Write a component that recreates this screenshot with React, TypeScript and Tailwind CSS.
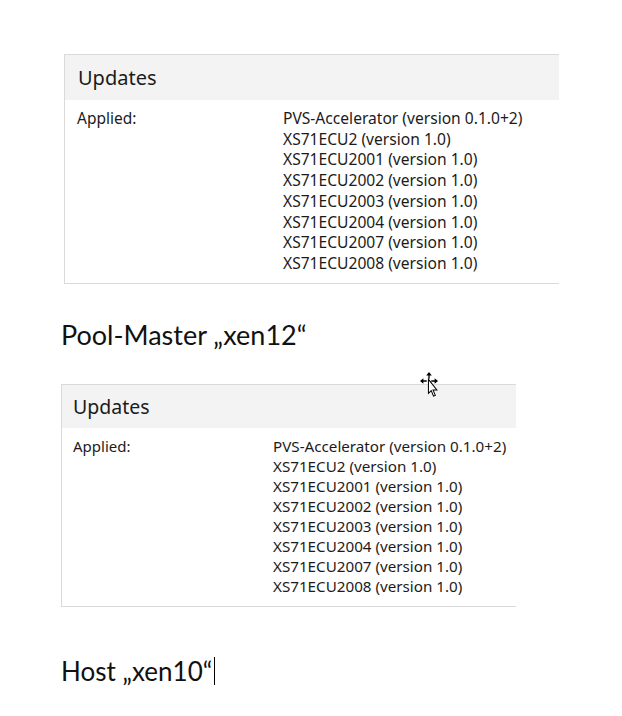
import React from "react";

const items = [
  "PVS-Accelerator (version 0.1.0+2)",
  "XS71ECU2 (version 1.0)",
  "XS71ECU2001 (version 1.0)",
  "XS71ECU2002 (version 1.0)",
  "XS71ECU2003 (version 1.0)",
  "XS71ECU2004 (version 1.0)",
  "XS71ECU2007 (version 1.0)",
  "XS71ECU2008 (version 1.0)",
];

const ui = { fontFamily: '"Noto Sans", "Open Sans", sans-serif' };
const doc = { fontFamily: 'Lato, "Open Sans", sans-serif' };

function Cursor() {
  return (
    <svg width="20" height="27" viewBox="0 0 16 24" className="absolute left-[419px] top-[372px]">
      <g fill="#000">
        <path d="M8 0 L10.5 3 L8.6 3 L8.6 6 L7.4 6 L7.4 3 L5.5 3 Z" />
        <path d="M0 8 L3 5.5 L3 7.4 L6 7.4 L6 8.6 L3 8.6 L3 10.5 Z" />
        <path d="M16 8 L13 5.5 L13 7.4 L10 7.4 L10 8.6 L13 8.6 L13 10.5 Z" />
        <path d="M7.4 8 L8.6 8 L8.6 13 L7.4 13 Z" />
      </g>
      <path d="M7.5 6.5 L7.5 19 L10 16.5 L12 21.5 L13.6 20.8 L11.6 16 L15 16 Z" fill="#fff" stroke="#000" strokeWidth="0.9" strokeLinejoin="miter" />
    </svg>
  );
}

export default function App() {
  return (
    <div className="relative w-[622px] h-[716px] bg-white overflow-hidden text-[#111]">
      <div className="pt-[54px] pl-[64px]">
        <div className="w-[495px] border-l border-t border-b border-[#dadada]" style={ui}>
          <div className="h-[45px] bg-[#f3f3f3] pl-[13px] flex items-center text-[20px] text-[#1b1b1b]">
            Updates
          </div>
          <div className="h-[183px] pt-[8px] flex text-[15.6px] leading-[20.7px] text-[#1b1b1b]">
            <div className="w-[218px] pl-[12px] text-[15.5px]">Applied:</div>
            <div className="flex flex-col">
              {items.map((t) => (
                <div key={t}>{t}</div>
              ))}
            </div>
          </div>
        </div>
      </div>

      <div className="pl-[61px] mt-[35px] text-[27px] leading-[32px]" style={doc}>
        Pool-Master „xen12“
      </div>

      <div className="pl-[61px] mt-[33px]">
        <div className="w-[455px] border-l border-t border-b border-[#dadada]" style={ui}>
          <div className="h-[43px] bg-[#f3f3f3] pl-[11px] flex items-center text-[19.5px] text-[#1b1b1b]">
            Updates
          </div>
          <div className="h-[178px] pt-[8px] flex text-[15.2px] leading-[20px] text-[#1b1b1b]">
            <div className="w-[211px] pl-[11px] text-[15px]">Applied:</div>
            <div className="flex flex-col">
              {items.map((t) => (
                <div key={t}>{t}</div>
              ))}
            </div>
          </div>
        </div>
      </div>

      <div className="pl-[61px] mt-[48px] text-[26px] leading-[32px] flex items-center" style={doc}>
        <span>Host „xen10“</span>
        <span className="inline-block w-[1px] h-[28px] bg-black ml-[2px]" />
      </div>

      <Cursor />
    </div>
  );
}
